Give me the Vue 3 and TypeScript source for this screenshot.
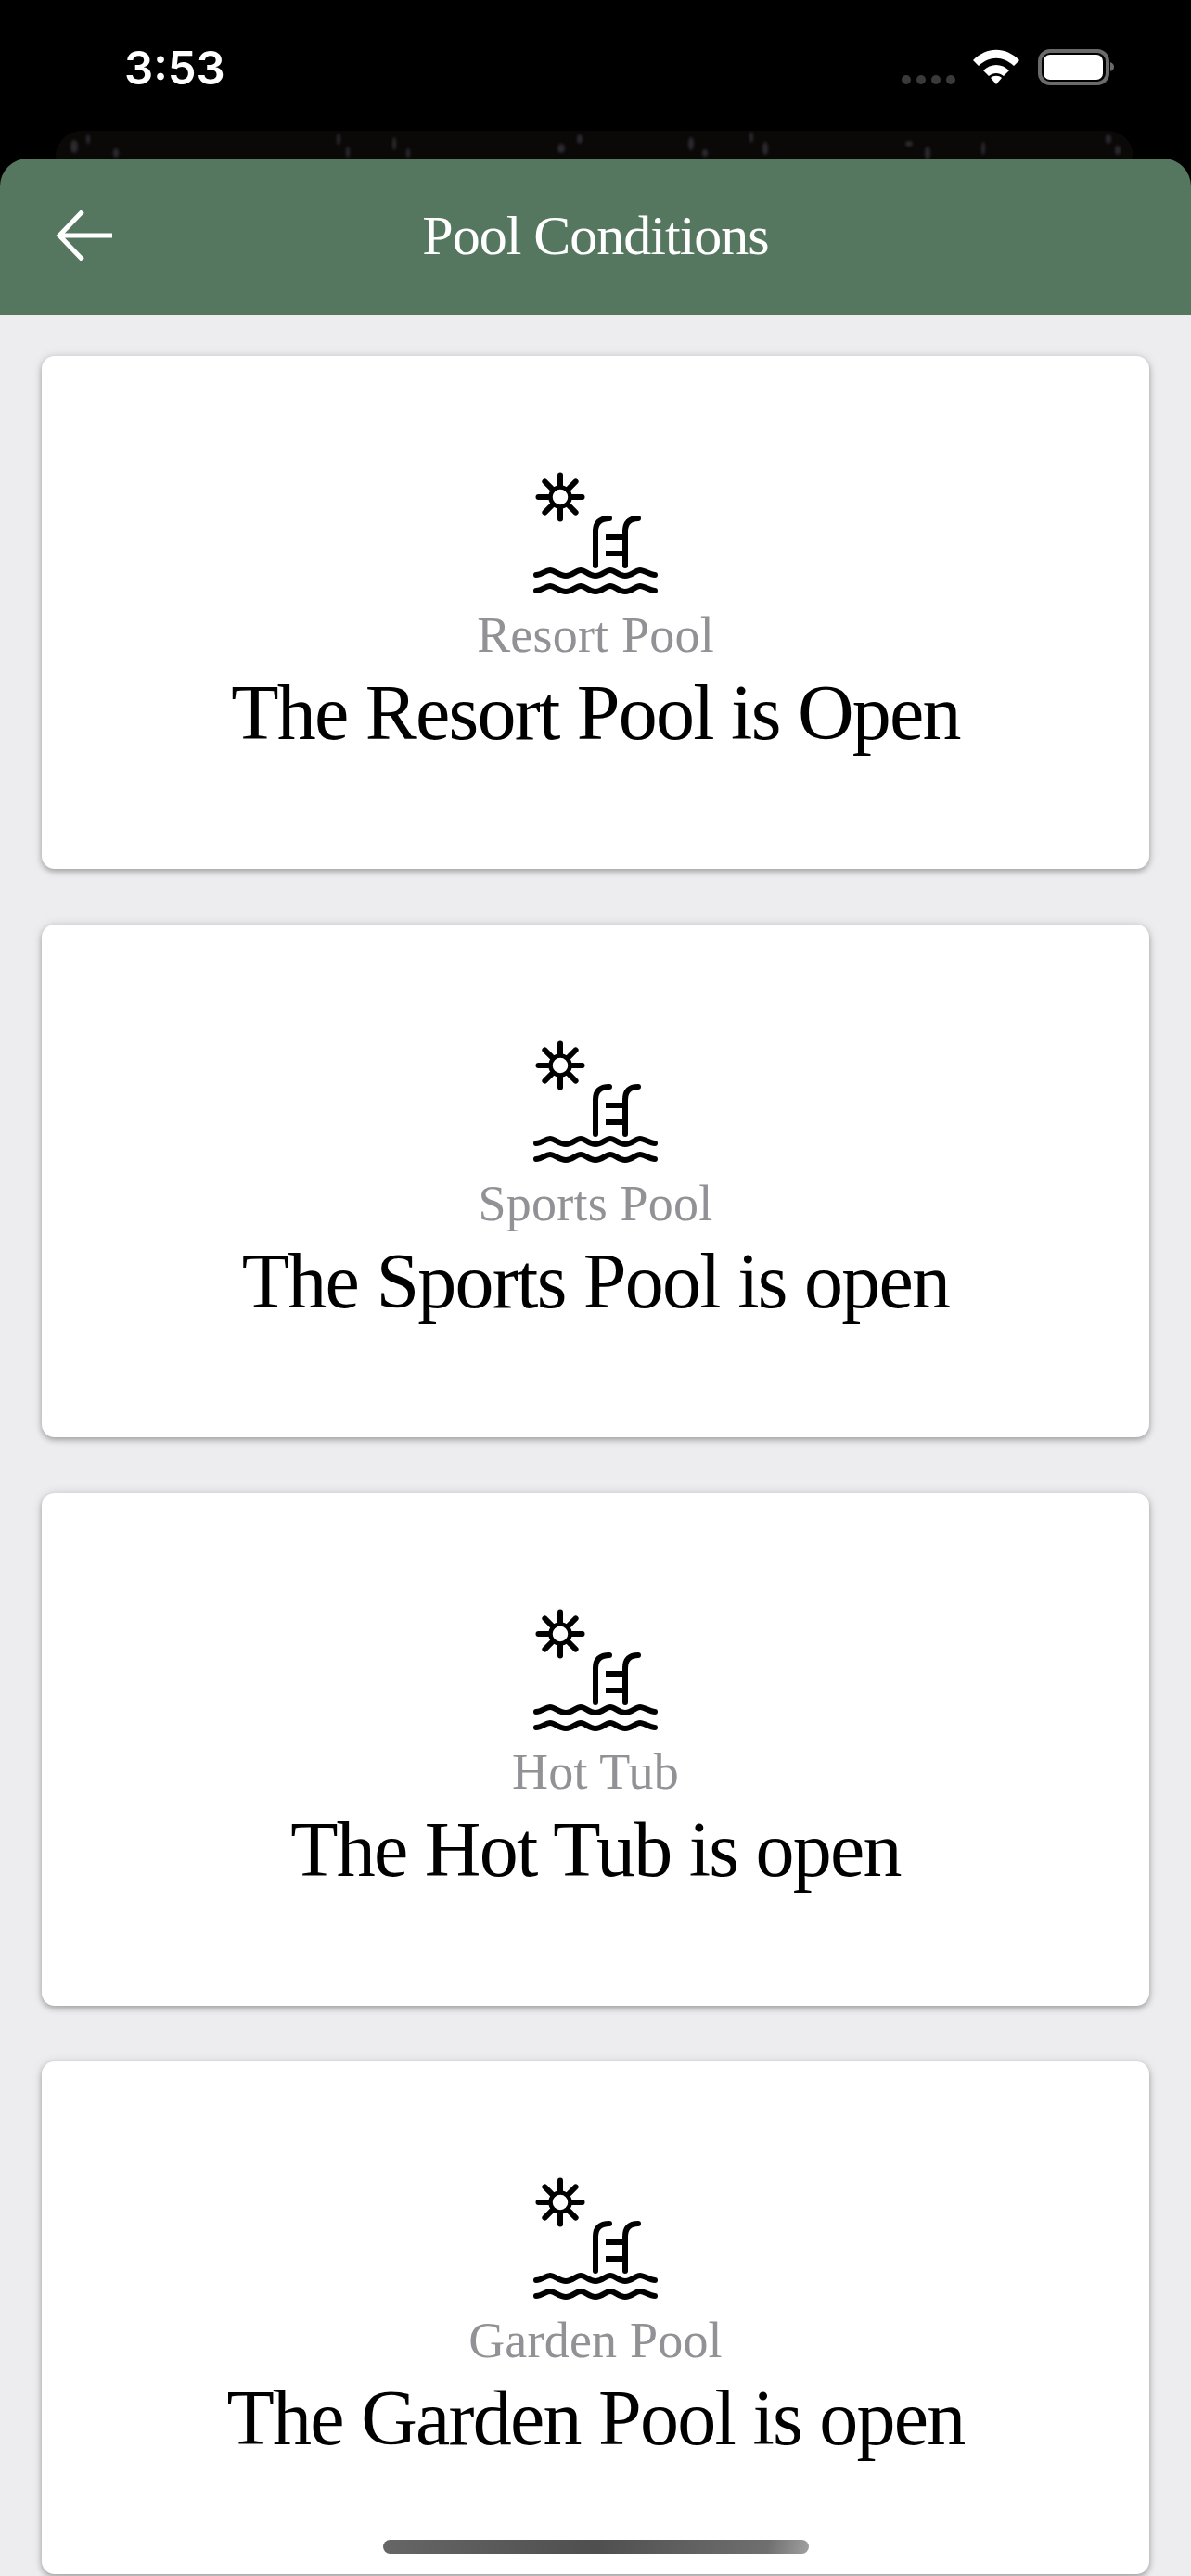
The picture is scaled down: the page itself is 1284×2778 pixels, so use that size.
<script setup lang="ts">
interface Pool { name: string; status: string }
const pools: Pool[] = [
  { name: 'Resort Pool', status: 'The Resort Pool is Open' },
  { name: 'Sports Pool', status: 'The Sports Pool is open' },
  { name: 'Hot Tub', status: 'The Hot Tub is open' },
  { name: 'Garden Pool', status: 'The Garden Pool is open' },
]
const rays = [0, 45, 90, 135, 180, 225, 270, 315]
const specks: [number, number, number, number][] = [
  [80, 158, 4, 7], [95, 150, 2, 5], [125, 165, 3, 5], [365, 150, 2, 6], [375, 164, 2, 6], [425, 155, 2, 7], [440, 165, 2, 5], [605, 160, 4, 5], [625, 150, 3, 5],
  [745, 155, 3, 7], [760, 165, 3, 4], [810, 148, 2, 6], [825, 160, 3, 7], [980, 155, 4, 3], [1000, 165, 3, 7], [1060, 160, 2, 7], [1195, 150, 3, 5], [1205, 162, 3, 5],
]
const wave = 'M578 0 C584 0 588 -5 593 -5 C598 -5 603 1 610 1 C617 1 621 -5 626 -5 C631 -5 635 1 642 1 C649 1 653 -5 658 -5 C663 -5 667 1 674 1 C681 1 685 -5 690 -5 C695 -5 700 0 706 0'
</script>

<template>
  <div class="screen">
    <svg class="backdrop" width="1162" height="40" viewBox="60 141 1162 40">
      <rect x="60" y="141" width="1162" height="60" rx="28" fill="#0b0808" />
      <g class="specks">
        <ellipse v-for="(s, i) in specks" :key="i" :cx="s[0]" :cy="s[1]" :rx="s[2]" :ry="s[3]" fill="#2a2a2f" />
      </g>
    </svg>

    <div class="status">
      <span class="time">3:53</span>
      <div class="status-icons">
        <svg width="230" height="44" viewBox="973 51 230 44">
          <g fill="#3a3a3a">
            <circle cx="978" cy="86" r="5" /><circle cx="994" cy="86" r="5" /><circle cx="1010" cy="86" r="5" /><circle cx="1026" cy="86" r="5" />
          </g>
          <g fill="#fff">
            <path d="M1050 65 C1065 50 1085 50 1100 65 L1094 71 C1082 60 1068 60 1056 71 Z" />
            <path d="M1061 76 C1069 68 1081 68 1089 76 L1083 82 C1078 78 1072 78 1067 82 Z" />
            <path d="M1069 84 C1072 81 1078 81 1081 84 L1075 91 Z" />
          </g>
          <rect x="1122" y="55" width="73" height="35" rx="11" fill="none" stroke="#6a6a6a" stroke-width="4" />
          <rect x="1126" y="59" width="64" height="27" rx="7" fill="#fff" />
          <path d="M1198 67 C1201 68 1202 70 1202 72 C1202 74 1201 76 1198 77 Z" fill="#6a6a6a" />
        </svg>
      </div>
    </div>

    <header class="bar">
      <svg class="back" width="62" height="56" viewBox="60 226 62 56">
        <path d="M121 254 H64 M89 228 L64 254 L89 280" fill="none" stroke="#fff" stroke-width="5" />
      </svg>
      <h1 class="title">Pool Conditions</h1>
    </header>

    <main class="list">
      <section v-for="p in pools" :key="p.name" class="card">
        <svg class="pool-icon" width="136" height="136" viewBox="574 508 136 136" fill="none" stroke="#000" stroke-width="6" stroke-linecap="round">
          <circle cx="604" cy="536" r="10.5" stroke-width="4.5" />
          <line v-for="r in rays" :key="r" x1="604" y1="523" x2="604" y2="512.5" :transform="`rotate(${r} 604 536)`" stroke-width="6" />
          <path d="M642 610 V573 Q642 559 657 559" />
          <path d="M674 610 V573 Q674 559 688 559" />
          <path d="M653 579 H674 M653 597 H674" stroke-linecap="butt" />
          <path :d="wave" transform="translate(0 620)" />
          <path :d="wave" transform="translate(0 637)" />
        </svg>
        <div class="name">{{ p.name }}</div>
        <div class="state">{{ p.status }}</div>
      </section>
    </main>

    <div class="home"></div>
  </div>
</template>

<style scoped>
.screen {
  position: relative;
  width: 1284px;
  height: 2778px;
  overflow: hidden;
  background: #000;
  font-family: "Liberation Serif", serif;
}
.backdrop {
  position: absolute;
  left: 60px;
  top: 141px;
}
.specks {
  filter: blur(1.5px);
}
.status {
  position: relative;
  height: 171px;
  box-sizing: border-box;
  padding: 45px 82px 0 134px;
  display: flex;
  justify-content: space-between;
  align-items: flex-start;
}
.time {
  font-family: Inter, "Liberation Sans", sans-serif;
  font-weight: 600;
  font-size: 49px;
  line-height: 58px;
  color: #fff;
}
.status-icons {
  display: flex;
  margin-top: 6px;
}
.bar {
  position: relative;
  height: 169px;
  background: #56775f;
  border-radius: 30px 30px 0 0;
  display: flex;
  align-items: center;
  justify-content: center;
}
.back {
  position: absolute;
  left: 60px;
  top: 55px;
}
.title {
  margin: 0 0 4px;
  font-weight: 400;
  font-size: 60px;
  line-height: 70px;
  letter-spacing: -1px;
  color: #fff;
}
.list {
  background: #edecef;
  padding: 44px 45px 0;
  display: flex;
  flex-direction: column;
  gap: 60px;
  height: 2438px;
  box-sizing: border-box;
}
.card {
  flex: none;
  height: 553px;
  box-sizing: border-box;
  padding-top: 124px;
  background: #fff;
  border-radius: 14px;
  box-shadow: 0 3px 6px rgba(0, 0, 0, 0.28), 0 0 12px rgba(0, 0, 0, 0.1);
  display: flex;
  flex-direction: column;
  align-items: center;
}
.pool-icon {
  display: block;
}
.name {
  margin-top: 10px;
  font-size: 54px;
  line-height: 62px;
  letter-spacing: 0.2px;
  color: #929296;
}
.state {
  margin-top: 5px;
  font-size: 84px;
  line-height: 96px;
  letter-spacing: -1.75px;
  color: #000;
}
.home {
  position: absolute;
  left: 413px;
  top: 2739px;
  width: 459px;
  height: 15px;
  border-radius: 8px;
  background: linear-gradient(100deg, #666 0%, #4f4f4f 50%, #6f6f6f 90%, #a0a0a0 100%);
}
</style>
